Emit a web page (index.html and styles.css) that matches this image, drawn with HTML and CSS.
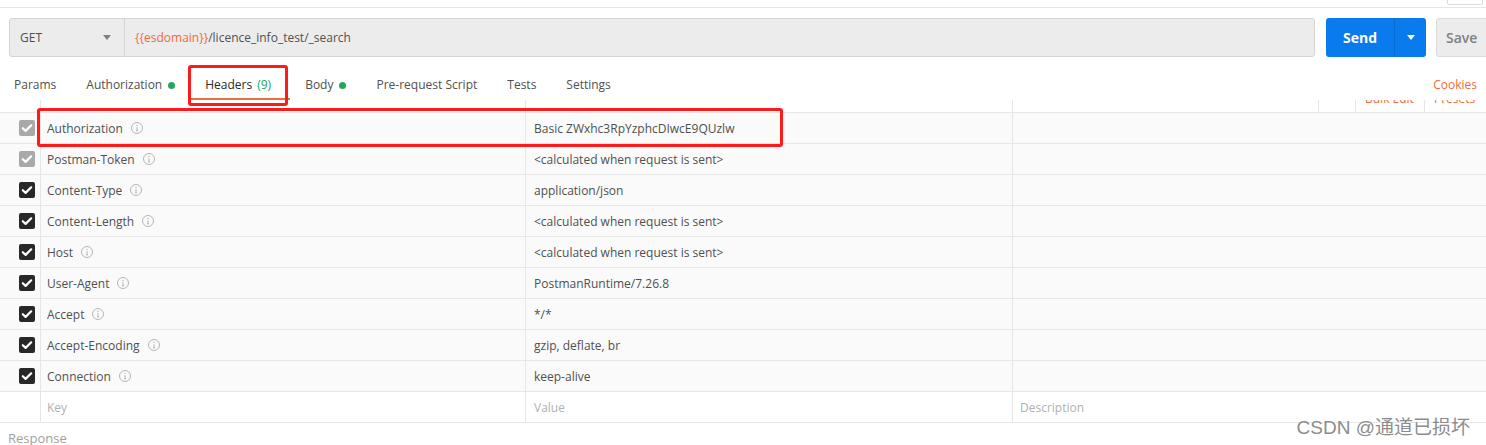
FILE: index.html
```html
<!DOCTYPE html>
<html lang="en">
<head>
    <meta charset="UTF-8">
    <title>Postman - Headers</title>
    <link rel="stylesheet" href="styles.css">
</head>
<body>

<div class="topline"><span class="topbox"></span></div>

<div class="request">
    <div class="url-group">
        <div class="method">
            <span>GET</span>
            <svg class="caret" width="8" height="5" viewBox="0 0 8 5"><path d="M0 0h8L4 5z" fill="#808080"/></svg>
        </div>
        <div class="url"><span class="var">{{esdomain}}</span>/licence_info_test/_search</div>
    </div>
    <div class="send">
        <span class="send-label">Send</span>
        <span class="send-more"><svg width="8" height="5" viewBox="0 0 8 5"><path d="M0 0h8L4 5z" fill="#fff"/></svg></span>
    </div>
    <div class="save">Save</div>
</div>

<nav class="tabs">
    <span class="tab">Params</span>
    <span class="tab">Authorization <i class="dot"></i></span>
    <span class="tab active">Headers <em class="count">(9)</em></span>
    <span class="tab">Body <i class="dot"></i></span>
    <span class="tab">Pre-request Script</span>
    <span class="tab">Tests</span>
    <span class="tab">Settings</span>
    <span class="cookies">Cookies</span>
</nav>

<div class="table">
    <div class="thead">
        <div class="cell check"></div>
        <div class="cell key"></div>
        <div class="cell value"></div>
        <div class="cell desc">
            <span class="hd-item hd-blank"></span>
            <span class="hd-item"><b>Bulk Edit</b></span>
            <span class="hd-item"><b>Presets</b></span>
        </div>
    </div>

    <div class="row">
        <div class="cell check"><span class="box muted"></span></div>
        <div class="cell key">Authorization <i class="info"></i></div>
        <div class="cell value">Basic ZWxhc3RpYzphcDIwcE9QUzlw</div>
        <div class="cell desc"></div>
    </div>
    <div class="row">
        <div class="cell check"><span class="box muted"></span></div>
        <div class="cell key">Postman-Token <i class="info"></i></div>
        <div class="cell value">&lt;calculated when request is sent&gt;</div>
        <div class="cell desc"></div>
    </div>
    <div class="row">
        <div class="cell check"><span class="box"></span></div>
        <div class="cell key">Content-Type <i class="info"></i></div>
        <div class="cell value">application/json</div>
        <div class="cell desc"></div>
    </div>
    <div class="row">
        <div class="cell check"><span class="box"></span></div>
        <div class="cell key">Content-Length <i class="info"></i></div>
        <div class="cell value">&lt;calculated when request is sent&gt;</div>
        <div class="cell desc"></div>
    </div>
    <div class="row">
        <div class="cell check"><span class="box"></span></div>
        <div class="cell key">Host <i class="info"></i></div>
        <div class="cell value">&lt;calculated when request is sent&gt;</div>
        <div class="cell desc"></div>
    </div>
    <div class="row">
        <div class="cell check"><span class="box"></span></div>
        <div class="cell key">User-Agent <i class="info"></i></div>
        <div class="cell value">PostmanRuntime/7.26.8</div>
        <div class="cell desc"></div>
    </div>
    <div class="row">
        <div class="cell check"><span class="box"></span></div>
        <div class="cell key">Accept <i class="info"></i></div>
        <div class="cell value">*/*</div>
        <div class="cell desc"></div>
    </div>
    <div class="row">
        <div class="cell check"><span class="box"></span></div>
        <div class="cell key">Accept-Encoding <i class="info"></i></div>
        <div class="cell value">gzip, deflate, br</div>
        <div class="cell desc"></div>
    </div>
    <div class="row">
        <div class="cell check"><span class="box"></span></div>
        <div class="cell key">Connection <i class="info"></i></div>
        <div class="cell value">keep-alive</div>
        <div class="cell desc"></div>
    </div>
    <div class="row new">
        <div class="cell check"></div>
        <div class="cell key placeholder">Key</div>
        <div class="cell value placeholder">Value</div>
        <div class="cell desc placeholder">Description</div>
    </div>
</div>

<div class="response">Response</div>

<!-- red annotation boxes from the screenshot -->
<div class="mark mark-tab"></div>
<div class="mark mark-row"></div>

<div class="watermark">CSDN @通道已损坏</div>

</body>
</html>
```

FILE: styles.css
```css
/* Reset */
* {
    margin: 0;
    padding: 0;
    box-sizing: border-box;
}
html {
    overflow: hidden;
}
body {
    font-family: 'Open Sans', 'Noto Sans', sans-serif;
    font-size: 12px;
    color: #505050;
    background: #fff;
    position: relative;
    width: 1486px;
    height: 445px;
    overflow: hidden;
}
/* Top strip */
.topline {
    height: 8px;
    border-bottom: 1px solid #e6e6e6;
    position: relative;
}
.topbox {
    position: absolute;
    right: 3px;
    top: -4px;
    width: 36px;
    height: 9px;
    border: 1px solid #dcdcdc;
    border-radius: 2px;
}
/* Request bar */
.request {
    display: flex;
    margin-top: 10px;
    padding-left: 9px;
    height: 39px;
}
.request > * {
    flex-shrink: 0;
}
.url-group {
    width: 1306px;
    display: flex;
    background: #ececec;
    border: 1px solid #d4d4d4;
    border-radius: 3px;
}
.method {
    width: 115px;
    display: flex;
    align-items: center;
    justify-content: space-between;
    padding: 0 13px 0 10px;
    border-right: 1px solid #d4d4d4;
    color: #505050;
}
.url {
    display: flex;
    align-items: center;
    padding-left: 10px;
    color: #505050;
}
.url .var {
    color: #f26b3a;
}
.send {
    margin-left: 11px;
    width: 100px;
    display: flex;
    background: #097bed;
    border-radius: 3px;
    color: #fff;
    font-size: 14px;
    font-weight: 700;
}
.send-label {
    width: 69px;
    display: flex;
    align-items: center;
    justify-content: center;
    border-right: 1px solid #0a6ad0;
}
.send-more {
    flex: 1;
    display: flex;
    align-items: center;
    justify-content: center;
}
.save {
    margin-left: 10px;
    width: 60px;
    display: flex;
    align-items: center;
    padding-left: 9px;
    background: #ececec;
    border: 1px solid #dcdcdc;
    border-radius: 3px;
    color: #808080;
    font-size: 14px;
    font-weight: 600;
}
/* Tabs */
.tabs {
    display: flex;
    margin-top: 8px;
    height: 35px;
}
.tab {
    display: flex;
    align-items: center;
    height: 35px;
    padding: 11px 15px 4px;
    border-bottom: 2px solid transparent;
    line-height: 18px;
    color: #505050;
}
.tab:first-child {
    padding-left: 14px;
}
.tab.active {
    color: #282828;
    padding-right: 19px;
    border-bottom-color: #f26b3a;
}
.tab .count {
    font-style: normal;
    color: #26a65b;
    margin-left: 5px;
}
.dot {
    display: inline-block;
    width: 7px;
    height: 7px;
    border-radius: 50%;
    background: #26a65b;
    margin-left: 6px;
}
.cookies {
    margin-left: auto;
    margin-right: 9px;
    padding-top: 11px;
    line-height: 18px;
    color: #f26b3a;
}
/* Headers table */
.table {
    display: flex;
    flex-direction: column;
}
.thead, .row {
    display: flex;
}
.thead {
    height: 13px;
    overflow: hidden;
    border-bottom: 1px solid #e6e6e6;
}
.row {
    height: 31px;
    background: #fafafa;
    border-bottom: 1px solid #e6e6e6;
}
.row.new {
    background: #fff;
}
.cell {
    display: flex;
    align-items: center;
    border-right: 1px solid #e6e6e6;
}
.cell.check {
    width: 41px;
    padding-left: 19px;
}
.cell.key {
    width: 485px;
    padding-left: 6px;
}
.cell.value {
    width: 487px;
    padding-left: 8px;
}
.cell.desc {
    flex: 1;
    padding-left: 7px;
    border-right: none;
}
.placeholder {
    color: #b0b0b0;
}
.thead .cell.desc {
    justify-content: flex-end;
    align-items: flex-start;
    padding-left: 0;
}
.hd-item {
    height: 12px;
    border-left: 1px solid #e6e6e6;
    padding: 0 9px;
    white-space: nowrap;
}
.hd-blank {
    width: 37px;
}
.hd-item:nth-child(2) {
    width: 69px;
}
.hd-item:nth-child(3) {
    width: 62px;
}
.hd-item b {
    display: block;
    font-weight: 400;
    color: #f26b3a;
    line-height: 12px;
    margin-top: -7px;
}
.box {
    width: 16px;
    height: 16px;
    border-radius: 2px;
    background: #282828 url("data:image/svg+xml,%3Csvg xmlns='http://www.w3.org/2000/svg' width='16' height='16'%3E%3Cpath d='M3.8 8.2l2.8 2.7 5.6-5.6' fill='none' stroke='%23fff' stroke-width='2.2' stroke-linecap='round' stroke-linejoin='round'/%3E%3C/svg%3E") center no-repeat;
}
.box.muted {
    background-color: #a9a9a9;
}
.info {
    display: inline-block;
    width: 12px;
    height: 12px;
    margin-left: 8px;
    background: url("data:image/svg+xml,%3Csvg xmlns='http://www.w3.org/2000/svg' width='12' height='12'%3E%3Ccircle cx='6' cy='6' r='5.5' fill='none' stroke='%23b5b5b5'/%3E%3Cpath d='M6 5.2v3.6M5 8.8h2' fill='none' stroke='%23b5b5b5'/%3E%3Ccircle cx='6' cy='3.5' r='.7' fill='%23b5b5b5'/%3E%3C/svg%3E") center no-repeat;
}
.response {
    padding-left: 8px;
    line-height: 30px;
    font-size: 13px;
    color: #a0a0a0;
}
/* Annotation overlays */
.mark {
    position: absolute;
    border: 3px solid #ff1a1a;
    border-radius: 3px;
}
.mark-tab {
    left: 188px;
    top: 65px;
    width: 100px;
    height: 41px;
}
.mark-row {
    left: 37px;
    top: 108px;
    width: 746px;
    height: 39px;
}
.watermark {
    position: absolute;
    right: 16px;
    top: 415px;
    font-family: 'Liberation Sans', 'Noto Sans CJK SC', sans-serif;
    font-size: 19px;
    line-height: 26px;
    color: #8c8c8c;
    text-shadow: 0 0 1px #fff;
}
```
